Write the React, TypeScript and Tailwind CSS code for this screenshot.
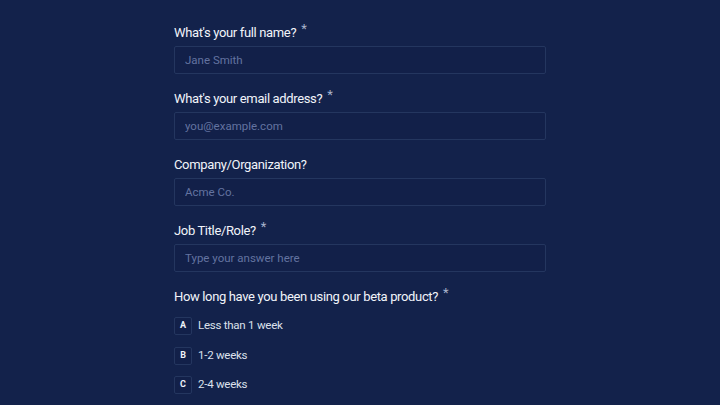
import React from 'react';

const fields = [
  { label: "What's your full name?", placeholder: 'Jane Smith', required: true },
  { label: "What's your email address?", placeholder: 'you@example.com', required: true },
  { label: 'Company/Organization?', placeholder: 'Acme Co.', required: false },
  { label: 'Job Title/Role?', placeholder: 'Type your answer here', required: true },
];

const options = [
  { key: 'A', text: 'Less than 1 week' },
  { key: 'B', text: '1-2 weeks' },
  { key: 'C', text: '2-4 weeks' },
];

const Label: React.FC<{ text: string; required?: boolean }> = ({ text, required }) => (
  <label className="flex h-5 items-center text-[13px] leading-5 tracking-[-0.35px] text-[#f1f4fa]">
    {text}
    {required && <span className="ml-[5px] -mt-2 text-[13px] text-[#a9b3cc]">*</span>}
  </label>
);

export default function App() {
  return (
    <div
      className="h-[405px] w-[720px] overflow-hidden bg-[#13224b]"
      style={{ fontFamily: 'Roboto, "Liberation Sans", sans-serif' }}
    >
      <form className="mx-auto flex w-[372px] flex-col pt-[23px]">
        {fields.map((f) => (
          <div key={f.label} className="mb-[15px] flex flex-col gap-[3px]">
            <Label text={f.label} required={f.required} />
            <input
              placeholder={f.placeholder}
              className="h-7 w-full rounded-[2px] border border-[#24365f] bg-[#122049] px-[10px] text-[11.5px] text-[#eef1f8] outline-none placeholder:text-[#6373a0]"
            />
          </div>
        ))}

        <div className="flex flex-col">
          <Label text="How long have you been using our beta product?" required />
          <div className="mt-[10px] flex flex-col gap-[11.5px]">
            {options.map((o) => (
              <div key={o.key} className="flex items-center gap-[6px]">
                <span className="flex h-[18px] w-[18px] items-center justify-center rounded-[2px] border border-[#24365f] bg-[#122049] text-[9px] font-bold text-[#eef1f8]">
                  {o.key}
                </span>
                <span className="text-[11.5px] tracking-[-0.25px] text-[#dce1ec]">{o.text}</span>
              </div>
            ))}
          </div>
        </div>
      </form>
    </div>
  );
}
